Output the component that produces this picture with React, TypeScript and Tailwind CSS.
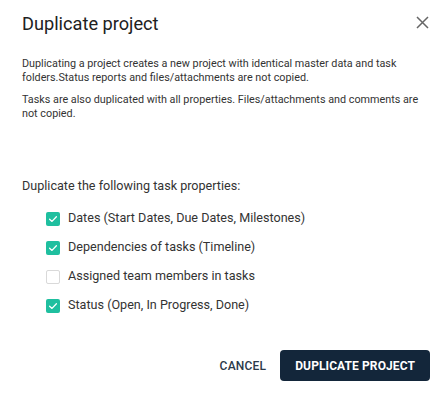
import React, { useState } from 'react';

type Option = {
  id: string;
  label: string;
  checked: boolean;
};

const initialOptions: Option[] = [
  { id: 'dates', label: 'Dates (Start Dates, Due Dates, Milestones)', checked: true },
  { id: 'deps', label: 'Dependencies of tasks (Timeline)', checked: true },
  { id: 'members', label: 'Assigned team members in tasks', checked: false },
  { id: 'status', label: 'Status (Open, In Progress, Done)', checked: true },
];

const CheckRow: React.FC<{ option: Option; onToggle: () => void }> = ({ option, onToggle }) => (
  <label className="flex items-center gap-[8px] h-[29px] cursor-pointer" onClick={onToggle}>
    {option.checked ? (
      <span className="w-[14px] h-[14px] rounded-[2px] bg-[#1fbf9f] flex items-center justify-center">
        <svg width="10" height="10" viewBox="0 0 10 10" fill="none">
          <path d="M1.6 5.2 L4 7.4 L8.4 2.8" stroke="#fff" strokeWidth="1.3" strokeLinecap="round" strokeLinejoin="round" />
        </svg>
      </span>
    ) : (
      <span className="w-[14px] h-[14px] rounded-[2px] border border-[#d9d9d9] bg-white" />
    )}
    <span className="text-[12.6px] text-[#333]">{option.label}</span>
  </label>
);

export default function App() {
  const [options, setOptions] = useState<Option[]>(initialOptions);

  const toggle = (id: string) => {
    setOptions(options.map(o => (o.id === id ? { ...o, checked: !o.checked } : o)));
  };

  return (
    <div className="w-[448px] h-[401px] bg-white font-['Roboto',sans-serif] overflow-hidden">
      <div className="flex items-start justify-between pl-[22px] pr-[19px] pt-[12px]">
        <h1 className="text-[18.2px] text-[#212121] leading-[24px]">Duplicate project</h1>
        <button className="mt-[4px] text-[#666]">
          <svg width="13" height="13" viewBox="0 0 13 13">
            <path d="M1 1 L12 12 M12 1 L1 12" stroke="currentColor" strokeWidth="1.5" />
          </svg>
        </button>
      </div>

      <div className="pl-[22px] pr-[24px] pt-[21px] text-[10.8px] leading-[14px] text-[#333]">
        <p>
          Duplicating a project creates a new project with identical master data and task
          folders.Status reports and files/attachments are not copied.
        </p>
        <p className="mt-[8px]">
          Tasks are also duplicated with all properties. Files/attachments and comments are
          not copied.
        </p>
      </div>

      <div className="px-[22px] pt-[57px]">
        <p className="text-[12.6px] text-[#333] leading-[16px]">Duplicate the following task properties:</p>
        <div className="pl-[24px] pt-[10px]">
          {options.map(o => (
            <CheckRow key={o.id} option={o} onToggle={() => toggle(o.id)} />
          ))}
        </div>
      </div>

      <div className="flex items-center justify-end gap-[14px] pr-[18px] pt-[30px]">
        <button className="text-[12px] font-medium text-[#2b3a4a] tracking-[0.2px]">CANCEL</button>
        <button className="h-[31px] px-[15px] rounded-[4px] bg-[#13263a] text-white text-[12px] font-bold tracking-[0.1px]">
          DUPLICATE PROJECT
        </button>
      </div>
    </div>
  );
}
